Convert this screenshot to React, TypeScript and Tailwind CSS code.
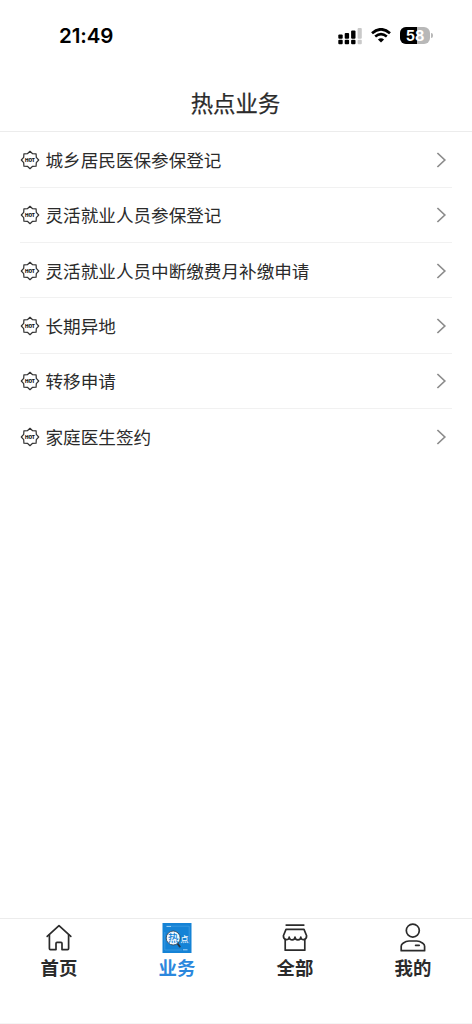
interface Service {
  id: string
  name: string
}

const services: Service[] = [
  { id: 'resident', name: '城乡居民医保参保登记' },
  { id: 'flexible', name: '灵活就业人员参保登记' },
  { id: 'supplement', name: '灵活就业人员中断缴费月补缴申请' },
  { id: 'remote', name: '长期异地' },
  { id: 'transfer', name: '转移申请' },
  { id: 'doctor', name: '家庭医生签约' },
]

const tabs = [
  { label: '首页', icon: HomeIcon },
  { label: '业务', icon: ServiceIcon, active: true },
  { label: '全部', icon: StoreIcon },
  { label: '我的', icon: UserIcon },
]

function HotIcon() {
  return (
    <svg width="20" height="20" viewBox="0 0 20 20" fill="none" className="shrink-0">
      <path
        d="M10 1.3 L12.6 3.7 L16.1 3.9 L16.3 7.4 L18.7 10 L16.3 12.6 L16.1 16.1 L12.6 16.3 L10 18.7 L7.4 16.3 L3.9 16.1 L3.7 12.6 L1.3 10 L3.7 7.4 L3.9 3.9 L7.4 3.7 Z"
        stroke="#333"
        strokeWidth="1.2"
        strokeLinejoin="round"
      />
      <text
        x="10"
        y="11.6"
        textAnchor="middle"
        fontSize="4.4"
        fontWeight="900"
        textLength="10"
        lengthAdjust="spacingAndGlyphs"
        fill="#111"
        fontFamily="Inter, sans-serif"
      >
        HOT
      </text>
    </svg>
  )
}

function ChevronIcon() {
  return (
    <svg width="12" height="18" viewBox="0 0 12 18" fill="none" className="shrink-0">
      <path d="M2.4 2 L9.8 9 L2.4 16" stroke="#8c8c8c" strokeWidth="1.7" />
    </svg>
  )
}

function HomeIcon() {
  return (
    <svg width="30" height="30" viewBox="0 0 30 30" fill="none" stroke="#2b2b2b" strokeWidth="1.7" strokeLinecap="round" strokeLinejoin="round">
      <path d="M3.2 13.4 L15 2.6 L26.8 13.4" />
      <path d="M5.4 11.8 V25.6 Q5.4 26.6 6.4 26.6 H12 V20.4 Q12 19.4 13 19.4 H17 Q18 19.4 18 20.4 V26.6 H23.6 Q24.6 26.6 24.6 25.6 V11.8" />
    </svg>
  )
}

function ServiceIcon() {
  return (
    <svg width="30" height="30" viewBox="0 0 30 30" fontFamily='"Noto Sans CJK SC", sans-serif'>
      <rect x="0.5" y="0" width="29" height="30" fill="#1583d6" />
      <path d="M9 3.2 H27.2 V21 M20 27 H2.8 V9" fill="none" stroke="#4fa6e5" strokeWidth="0.6" />
      <path d="M4.5 3.4 H9 M21 26.8 H25.5" stroke="#b9def8" strokeWidth="0.9" />
      <path d="M15.5 20.5 L17.8 23.6" stroke="#2b3440" strokeWidth="1.8" strokeLinecap="round" />
      <circle cx="11.2" cy="15" r="7" fill="#f2f9fe" stroke="#34495c" strokeWidth="0.9" />
      <text x="11.2" y="19" textAnchor="middle" fontSize="10.5" fontWeight="500" fill="#1583d6">热</text>
      <text x="22.6" y="19.2" textAnchor="middle" fontSize="8" fontWeight="500" fill="#f2f9fe">点</text>
    </svg>
  )
}

function StoreIcon() {
  return (
    <svg width="30" height="30" viewBox="0 0 30 30" fill="none" stroke="#2b2b2b" strokeWidth="1.7" strokeLinecap="round" strokeLinejoin="round">
      <path d="M6.2 2.1 H23.8" />
      <path d="M6 6.4 H24 L26.6 12.8 C26.6 17.8 20.8 17.8 20.8 14 C20.8 17.8 15 17.8 15 14 C15 17.8 9.2 17.8 9.2 14 C9.2 17.8 3.4 17.8 3.4 12.8 Z" />
      <path d="M5.2 16.6 V27.2 H24.8 V16.6" />
    </svg>
  )
}

function UserIcon() {
  return (
    <svg width="30" height="30" viewBox="0 0 30 30" fill="none" stroke="#2b2b2b" strokeWidth="1.7" strokeLinecap="round" strokeLinejoin="round">
      <circle cx="14.8" cy="7.6" r="6.5" />
      <path d="M3.2 27.7 V23.2 Q3.2 21.5 5 20.3 Q8.2 18 11 18 H18.8 Q21.6 18 24.8 20.3 Q26.6 21.5 26.6 23.2 V27.7 Z" />
      <path d="M17.6 22.3 H21.2" />
    </svg>
  )
}

function StatusBar() {
  return (
    <div className="flex h-[71px] shrink-0 items-center justify-between pl-[59px] pr-[39px] text-black">
      <span className="w-[55px] whitespace-nowrap pt-px font-[Inter] text-[20.5px] font-semibold leading-none tracking-[-0.1px]">
        21:49
      </span>
      <div className="flex items-center">
        <svg width="24" height="18" viewBox="0 0 24 18">
          <g fill="#000">
            <rect x="0.3" y="7.4" width="4.4" height="4.3" rx="1" />
            <rect x="6.7" y="6" width="4.4" height="5.7" rx="1" />
            <rect x="13.1" y="3.4" width="4.4" height="8.3" rx="1" />
            <rect x="0.3" y="12.8" width="4.4" height="4.4" rx="1" />
            <rect x="6.7" y="12.8" width="4.4" height="4.4" rx="1" />
            <rect x="13.1" y="12.8" width="4.4" height="4.4" rx="1" />
          </g>
          <g fill="#c9c9c9">
            <rect x="19.6" y="1" width="4.2" height="10.7" rx="1" />
            <rect x="19.6" y="12.8" width="4.2" height="4.4" rx="1" />
          </g>
        </svg>
        <svg width="20" height="15" viewBox="0 0 20 15" fill="none" stroke="#000" className="ml-[9px]">
          <path d="M1 5.2 Q10 -2.6 19 5.2" strokeWidth="2.7" />
          <path d="M4.2 8.6 Q10 3.8 15.8 8.6" strokeWidth="2.6" />
          <path d="M6.9 11.5 Q10 9 13.1 11.5 L10 14.6 Z" fill="#000" stroke="none" />
        </svg>
        <div className="relative ml-[9px] h-[17px] w-[30px] overflow-hidden rounded-[6px] bg-[#b8b8b8]">
          <div className="h-full w-[58%] bg-black" />
          <span className="absolute inset-0 text-center font-[Inter] text-[14.5px] font-bold leading-[17px] text-white">
            58
          </span>
        </div>
        <div className="ml-px h-[5px] w-[2px] rounded-r-full bg-[#b8b8b8]" />
      </div>
    </div>
  )
}

export default function App() {
  return (
    <div className="flex h-screen w-full flex-col overflow-hidden bg-white font-['Noto_Sans_CJK_SC',sans-serif] text-[#2b2b2b]">
      <StatusBar />

      {/* Header */}
      <header className="flex h-[61px] shrink-0 items-center justify-center border-b border-[#ececec] pr-px pt-[3px]">
        <h1 className="text-[22.4px] font-normal leading-none [-webkit-text-stroke:0.25px_#2b2b2b]">热点业务</h1>
      </header>

      {/* Hot services */}
      <main className="flex-1 pt-[0.4px]">
        {services.map((service) => (
          <div key={service.id} className="group px-5">
            <div className="flex h-[55.3px] items-center border-b border-[#f1f1f1] pr-[5px] pt-[0.8px] group-last:border-b-0">
              <HotIcon />
              <span className="ml-[5.5px] flex-1 text-[17.6px] leading-none">{service.name}</span>
              <ChevronIcon />
            </div>
          </div>
        ))}
      </main>

      {/* Tab bar */}
      <nav className="grid h-[105px] shrink-0 grid-cols-4 border-t border-[#ececec]">
        {tabs.map(({ label, icon: Icon, active }) => (
          <div key={label} className="flex flex-col items-center pt-[4px]">
            <Icon />
            <span
              className={
                active
                  ? 'mt-[5px] text-[18.4px] font-bold leading-none text-[#2b87dd]'
                  : 'mt-[5px] text-[18.4px] font-bold leading-none'
              }
            >
              {label}
            </span>
          </div>
        ))}
      </nav>
      <div className="h-px shrink-0 bg-[#f5f5f5]" />
    </div>
  )
}
